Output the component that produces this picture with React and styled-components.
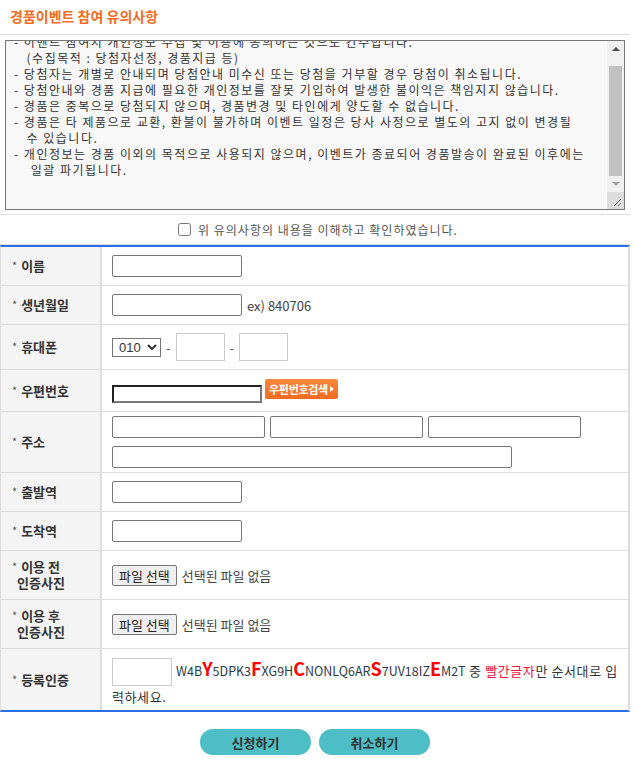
import React, { useEffect, useRef } from "react";
import styled, { createGlobalStyle } from "styled-components";

const GlobalStyle = createGlobalStyle`
  body {
    margin: 0;
    background: #fff;
    font-family: "Noto Sans CJK KR", "Noto Sans", sans-serif;
    color: #333;
  }
`;

const Page = styled.div`
  width: 630px;
`;

const Title = styled.h2`
  margin: 0;
  height: 35px;
  padding: 6px 0 0 10px;
  box-sizing: border-box;
  font-size: 14px;
  font-weight: bold;
  color: #f26d21;
  border-bottom: 1px solid #ddd;
`;

const NoticeBox = styled.div`
  padding: 5px 5px 4px 5px;
  border-bottom: 1px solid #ddd;
`;

const NoticeFrame = styled.div`
  display: flex;
  width: 620px;
  height: 170px;
  box-sizing: border-box;
  border: 1px solid #767676;
  background: #f8f8f8;
`;

const Notice = styled.textarea`
  flex: 1;
  display: block;
  height: 100%;
  box-sizing: border-box;
  margin: 0;
  padding: 2px 8px;
  border: none;
  outline: none;
  background: transparent;
  color: #333;
  font-family: "Noto Sans CJK KR", sans-serif;
  font-size: 12px;
  line-height: 16px;
  letter-spacing: 1.5px;
  resize: none;
  white-space: pre;
  overflow: hidden;
`;

const ScrollBar = styled.div`
  display: flex;
  flex-direction: column;
  width: 17px;
  background: #f1f1f1;
`;

const Arrow = styled.div`
  display: flex;
  align-items: center;
  justify-content: center;
  height: 17px;

  &::before {
    content: "";
    border-left: 4px solid transparent;
    border-right: 4px solid transparent;
    ${({ down }) =>
      down
        ? "border-top: 4px solid #a3a3a3;"
        : "border-bottom: 4px solid #505050;"}
  }
`;

const Track = styled.div`
  flex: 1;
  padding: 8px 2px 0 2px;
`;

const Thumb = styled.div`
  height: 110px;
  background: #c1c1c1;
`;

const Grip = styled.div`
  height: 17px;
  background: #dcdcdc;
  display: flex;
  align-items: flex-end;
  justify-content: flex-end;
  padding: 0 2px 2px 0;
  box-sizing: border-box;
`;

const Agree = styled.label`
  display: flex;
  justify-content: center;
  align-items: center;
  gap: 7px;
  height: 29px;
  padding-left: 6px;
  font-size: 12px;
  letter-spacing: 1px;
  color: #555;
  border-bottom: 1px solid #ddd;

  input {
    margin: 0;
    width: 13px;
    height: 13px;
  }
`;

const Form = styled.div`
  border-left: 1px solid #ddd;
  border-right: 2px solid #ddd;
  border-top: 2px solid #2b6de5;
  border-bottom: 2px solid #2b6de5;
`;

const Row = styled.div`
  display: grid;
  grid-template-columns: 101px 1fr;
  height: ${({ h }) => h}px;
  box-sizing: border-box;
  border-bottom: 1px solid #ddd;

  &:last-child {
    border-bottom: none;
  }
`;

const Label = styled.div`
  display: flex;
  flex-direction: column;
  justify-content: center;
  padding-left: 11px;
  background: #f4f4f4;
  border-right: 2px solid #ddd;
  font-size: 13px;
  font-weight: bold;
  line-height: 16px;
  color: #333;
`;

const Star = styled.span`
  display: inline-block;
  vertical-align: middle;
  font-size: 11px;
  line-height: 11px;
  font-weight: normal;
  color: #555;
  margin: -3px 4px 0 0;
`;

const SubLine = styled.span`
  padding-left: 5px;
`;

const Cell = styled.div`
  display: flex;
  align-items: center;
  flex-wrap: ${({ wrap }) => (wrap ? "wrap" : "nowrap")};
  column-gap: ${({ gap }) => gap ?? 6}px;
  padding: 0 10px;
  font-size: 13px;
  color: #444;
`;

const TextInput = styled.input`
  width: ${({ w }) => w || 130}px;
  height: ${({ hgt }) => hgt || 22}px;
  box-sizing: border-box;
  margin: 0;
  border: 1px solid ${({ light }) => (light ? "#ccc" : "#767676")};
  border-radius: ${({ light }) => (light ? 0 : 2)}px;
  padding: 1px 4px;
  background: #fff;
  font-family: inherit;
`;

const InsetInput = styled.input`
  width: 150px;
  height: 18px;
  box-sizing: border-box;
  margin: 7px 3px 0 0;
  border: 2px solid;
  border-color: #222 #777 #777 #222;
  padding: 0 3px;
`;

const Select = styled.select`
  width: 49px;
  height: 19px;
  box-sizing: border-box;
  margin: 0;
  padding: 0 2px;
  border: 1px solid #767676;
  background: #fff;
  font-family: "Liberation Sans", sans-serif;
  font-size: 13px;
  color: #333;
`;

const Dash = styled.span`
  color: #555;
  font-size: 13px;
`;

const ZipButton = styled.button`
  display: inline-flex;
  align-items: center;
  gap: 2px;
  height: 20px;
  margin: 0 0 4px 0;
  padding: 0 4px;
  border: none;
  border-radius: 2px;
  background: linear-gradient(#f8893c, #f26b1f);
  color: #fff;
  font-family: inherit;
  font-size: 11px;
  font-weight: bold;
  letter-spacing: -0.3px;
  cursor: pointer;

  &::after {
    content: "";
    border-left: 4px solid #fff;
    border-top: 3px solid transparent;
    border-bottom: 3px solid transparent;
  }
`;

const FileButton = styled.button`
  height: 21px;
  margin: 0;
  padding: 0 6px;
  border: 1px solid #767676;
  border-radius: 2px;
  background: #efefef;
  font-family: inherit;
  font-size: 13px;
  color: #222;
`;

const FileText = styled.span`
  font-size: 13px;
  color: #444;
`;

const CaptchaCell = styled.div`
  padding: 8px 6px 0 10px;
  font-size: 13px;
  line-height: 22px;
  letter-spacing: 0.6px;
  color: #333;
  word-break: break-all;

  input {
    vertical-align: middle;
    margin-right: 4px;
  }
`;

const Code = styled.span`
  font-size: 12.5px;
  letter-spacing: 0;
  color: #2d3a4a;
`;

const Red = styled.span`
  font-size: 18px;
  font-weight: bold;
  letter-spacing: 0;
  color: #f00;
`;

const RedWord = styled.span`
  color: #f0123c;
`;

const Buttons = styled.div`
  display: flex;
  justify-content: center;
  gap: 8px;
  padding: 17px 0 0 0;
`;

const PillButton = styled.button`
  width: 111px;
  height: 26px;
  border: none;
  border-radius: 13px;
  background: #4dbdc6;
  font-family: inherit;
  font-size: 13px;
  font-weight: bold;
  color: #333;
  cursor: pointer;
`;

const noticeText = [
  "- 이벤트 참여시 개인정보 수집 및 이용에 동의하는 것으로 간주합니다.",
  "   (수집목적 : 당첨자선정, 경품지급 등)",
  "- 당첨자는 개별로 안내되며 당첨안내 미수신 또는 당첨을 거부할 경우 당첨이 취소됩니다.",
  "- 당첨안내와 경품 지급에 필요한 개인정보를 잘못 기입하여 발생한 불이익은 책임지지 않습니다.",
  "- 경품은 중복으로 당첨되지 않으며, 경품변경 및 타인에게 양도할 수 없습니다.",
  "- 경품은 타 제품으로 교환, 환불이 불가하며 이벤트 일정은 당사 사정으로 별도의 고지 없이 변경될",
  "   수 있습니다.",
  "- 개인정보는 경품 이외의 목적으로 사용되지 않으며, 이벤트가 종료되어 경품발송이 완료된 이후에는",
  "    일괄 파기됩니다.",
  "",
  "",
  "",
].join("\n");

const code = [
  ["W4B", "Y"],
  ["5DPK3", "F"],
  ["XG9H", "C"],
  ["NONLQ6AR", "S"],
  ["7UV18IZ", "E"],
  ["M2T", null],
];

function App() {
  const noticeRef = useRef(null);

  useEffect(() => {
    if (noticeRef.current) noticeRef.current.scrollTop = 9;
  }, []);

  return (
    <Page>
      <GlobalStyle />
      <Title>경품이벤트 참여 유의사항</Title>
      <NoticeBox>
        <NoticeFrame>
          <Notice ref={noticeRef} readOnly value={noticeText} />
          <ScrollBar>
            <Arrow />
            <Track>
              <Thumb />
            </Track>
            <Arrow down />
            <Grip>
              <svg width="10" height="10" viewBox="0 0 10 10">
                <path d="M9 2 L2 9 M9 6 L6 9" stroke="#777" strokeWidth="1" />
              </svg>
            </Grip>
          </ScrollBar>
        </NoticeFrame>
      </NoticeBox>
      <Agree>
        <input type="checkbox" />
        위 유의사항의 내용을 이해하고 확인하였습니다.
      </Agree>

      <Form>
        <Row h={39}>
          <Label><div><Star>*</Star>이름</div></Label>
          <Cell><TextInput /></Cell>
        </Row>
        <Row h={39}>
          <Label><div><Star>*</Star>생년월일</div></Label>
          <Cell gap={5}>
            <TextInput />
            <FileText>ex) 840706</FileText>
          </Cell>
        </Row>
        <Row h={45}>
          <Label><div><Star>*</Star>휴대폰</div></Label>
          <Cell gap={5}>
            <Select defaultValue="010">
              <option>010</option>
              <option>011</option>
              <option>016</option>
              <option>017</option>
              <option>019</option>
            </Select>
            <Dash>-</Dash>
            <TextInput light w={49} hgt={28} />
            <Dash>-</Dash>
            <TextInput light w={49} hgt={28} />
          </Cell>
        </Row>
        <Row h={42}>
          <Label><div><Star>*</Star>우편번호</div></Label>
          <Cell gap={0}>
            <InsetInput />
            <ZipButton>우편번호검색</ZipButton>
          </Cell>
        </Row>
        <Row h={61}>
          <Label><div><Star>*</Star>주소</div></Label>
          <Cell wrap gap={5}>
            <TextInput w={153} />
            <TextInput w={153} />
            <TextInput w={153} />
            <TextInput w={400} />
          </Cell>
        </Row>
        <Row h={39}>
          <Label><div><Star>*</Star>출발역</div></Label>
          <Cell><TextInput /></Cell>
        </Row>
        <Row h={39}>
          <Label><div><Star>*</Star>도착역</div></Label>
          <Cell><TextInput /></Cell>
        </Row>
        <Row h={49}>
          <Label>
            <div><Star>*</Star>이용 전</div>
            <SubLine>인증사진</SubLine>
          </Label>
          <Cell gap={5}>
            <FileButton>파일 선택</FileButton>
            <FileText>선택된 파일 없음</FileText>
          </Cell>
        </Row>
        <Row h={49}>
          <Label>
            <div><Star>*</Star>이용 후</div>
            <SubLine>인증사진</SubLine>
          </Label>
          <Cell gap={5}>
            <FileButton>파일 선택</FileButton>
            <FileText>선택된 파일 없음</FileText>
          </Cell>
        </Row>
        <Row h={61}>
          <Label><div><Star>*</Star>등록인증</div></Label>
          <CaptchaCell>
            <TextInput light w={60} hgt={28} />
            {code.map(([plain, red], i) => (
              <React.Fragment key={i}>
                <Code>{plain}</Code>
                {red && <Red>{red}</Red>}
              </React.Fragment>
            ))}
            {" 중 "}
            <RedWord>빨간글자</RedWord>만 순서대로 입력하세요.
          </CaptchaCell>
        </Row>
      </Form>

      <Buttons>
        <PillButton>신청하기</PillButton>
        <PillButton>취소하기</PillButton>
      </Buttons>
    </Page>
  );
}

export default App;
